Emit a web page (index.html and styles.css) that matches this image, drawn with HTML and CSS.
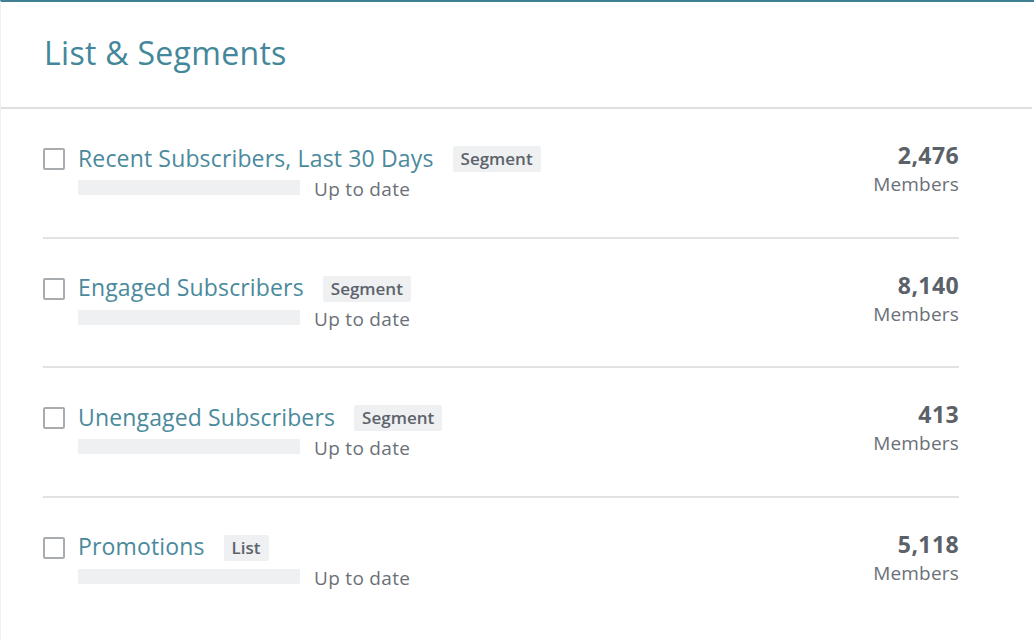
FILE: index.html
```html
<!DOCTYPE html>
<html>
<head>
<meta charset="utf-8">
<link rel="stylesheet" href="styles.css">
</head>
<body>
<div class="card">
  <div class="card-header">
    <h1 class="card-title">List &amp; Segments</h1>
  </div>
  <div class="rows">
    <div class="row">
      <div class="row-left">
        <span class="checkbox"></span>
        <div class="row-info">
          <div class="row-title-line">
            <span class="row-title">Recent Subscribers, Last 30 Days</span>
            <span class="badge">Segment</span>
          </div>
          <div class="row-status-line">
            <span class="progress"></span>
            <span class="status">Up to date</span>
          </div>
        </div>
      </div>
      <div class="row-right">
        <div class="count">2,476</div>
        <div class="count-label">Members</div>
      </div>
    </div>
    <div class="row">
      <div class="row-left">
        <span class="checkbox"></span>
        <div class="row-info">
          <div class="row-title-line">
            <span class="row-title">Engaged Subscribers</span>
            <span class="badge">Segment</span>
          </div>
          <div class="row-status-line">
            <span class="progress"></span>
            <span class="status">Up to date</span>
          </div>
        </div>
      </div>
      <div class="row-right">
        <div class="count">8,140</div>
        <div class="count-label">Members</div>
      </div>
    </div>
    <div class="row">
      <div class="row-left">
        <span class="checkbox"></span>
        <div class="row-info">
          <div class="row-title-line">
            <span class="row-title">Unengaged Subscribers</span>
            <span class="badge">Segment</span>
          </div>
          <div class="row-status-line">
            <span class="progress"></span>
            <span class="status">Up to date</span>
          </div>
        </div>
      </div>
      <div class="row-right">
        <div class="count">413</div>
        <div class="count-label">Members</div>
      </div>
    </div>
    <div class="row">
      <div class="row-left">
        <span class="checkbox"></span>
        <div class="row-info">
          <div class="row-title-line">
            <span class="row-title">Promotions</span>
            <span class="badge">List</span>
          </div>
          <div class="row-status-line">
            <span class="progress"></span>
            <span class="status">Up to date</span>
          </div>
        </div>
      </div>
      <div class="row-right">
        <div class="count">5,118</div>
        <div class="count-label">Members</div>
      </div>
    </div>
  </div>
</div>
</body>
</html>
```
FILE: styles.css
```css
html, body {
  margin: 0;
  padding: 0;
  background: #ffffff;
}
body {
  font-family: "Open Sans", "Lato", sans-serif;
  width: 1034px;
  height: 642px;
  overflow: hidden;
}
.card {
  border-top: 2px solid #3f8093;
  border-left: 1px solid #f0f0f0;
  height: 640px;
  box-sizing: border-box;
}
.card-header {
  height: 105px;
  border-bottom: 2px solid #dedede;
  margin-right: 2px;
  display: flex;
  align-items: center;
  padding-left: 43px;
}
.card-title {
  margin: 0;
  font-size: 32px;
  font-weight: 400;
  color: #43879a;
  line-height: 1;
  letter-spacing: 0.3px;
  padding-bottom: 4px;
}
.rows {
  padding: 0 75px 0 42px;
}
.row {
  display: flex;
  justify-content: space-between;
  align-items: flex-start;
  padding: 37px 0 41.5px;
  border-bottom: 2px solid #e2e2e2;
}
.row:last-child {
  border-bottom: none;
}
.row-left {
  display: flex;
  align-items: flex-start;
}
.checkbox {
  width: 18px;
  height: 18px;
  border: 2px solid #a9acaf;
  border-radius: 2px;
  margin-top: 2px;
  margin-right: 13px;
  flex: none;
}
.row-info {
  display: flex;
  flex-direction: column;
}
.row-title-line {
  display: flex;
  align-items: center;
  height: 26px;
}
.row-title {
  font-size: 23px;
  color: #4a8a9c;
  margin-right: 19px;
  white-space: nowrap;
  letter-spacing: 0.15px;
  padding-bottom: 3px;
}
.badge {
  background: #eef0f2;
  color: #5d636b;
  font-size: 17px;
  font-weight: 600;
  height: 26px;
  line-height: 26px;
  padding: 0 8px;
  border-radius: 2px;
}
.row-status-line {
  display: flex;
  align-items: center;
  margin-top: 8px;
  height: 15px;
}
.progress {
  width: 222px;
  height: 15px;
  background: #eef0f2;
  margin-right: 14px;
}
.status {
  font-size: 19px;
  color: #6b7078;
  white-space: nowrap;
  letter-spacing: 0.3px;
  margin-top: 3px;
}
.row-right {
  text-align: right;
}
.count {
  font-size: 23px;
  font-weight: 700;
  color: #5b6168;
  line-height: 22px;
  letter-spacing: 0.4px;
  margin-top: -2px;
}
.count-label {
  font-size: 19px;
  color: #6b7078;
  line-height: 22px;
  letter-spacing: 0.2px;
  margin-top: 7px;
}
```
